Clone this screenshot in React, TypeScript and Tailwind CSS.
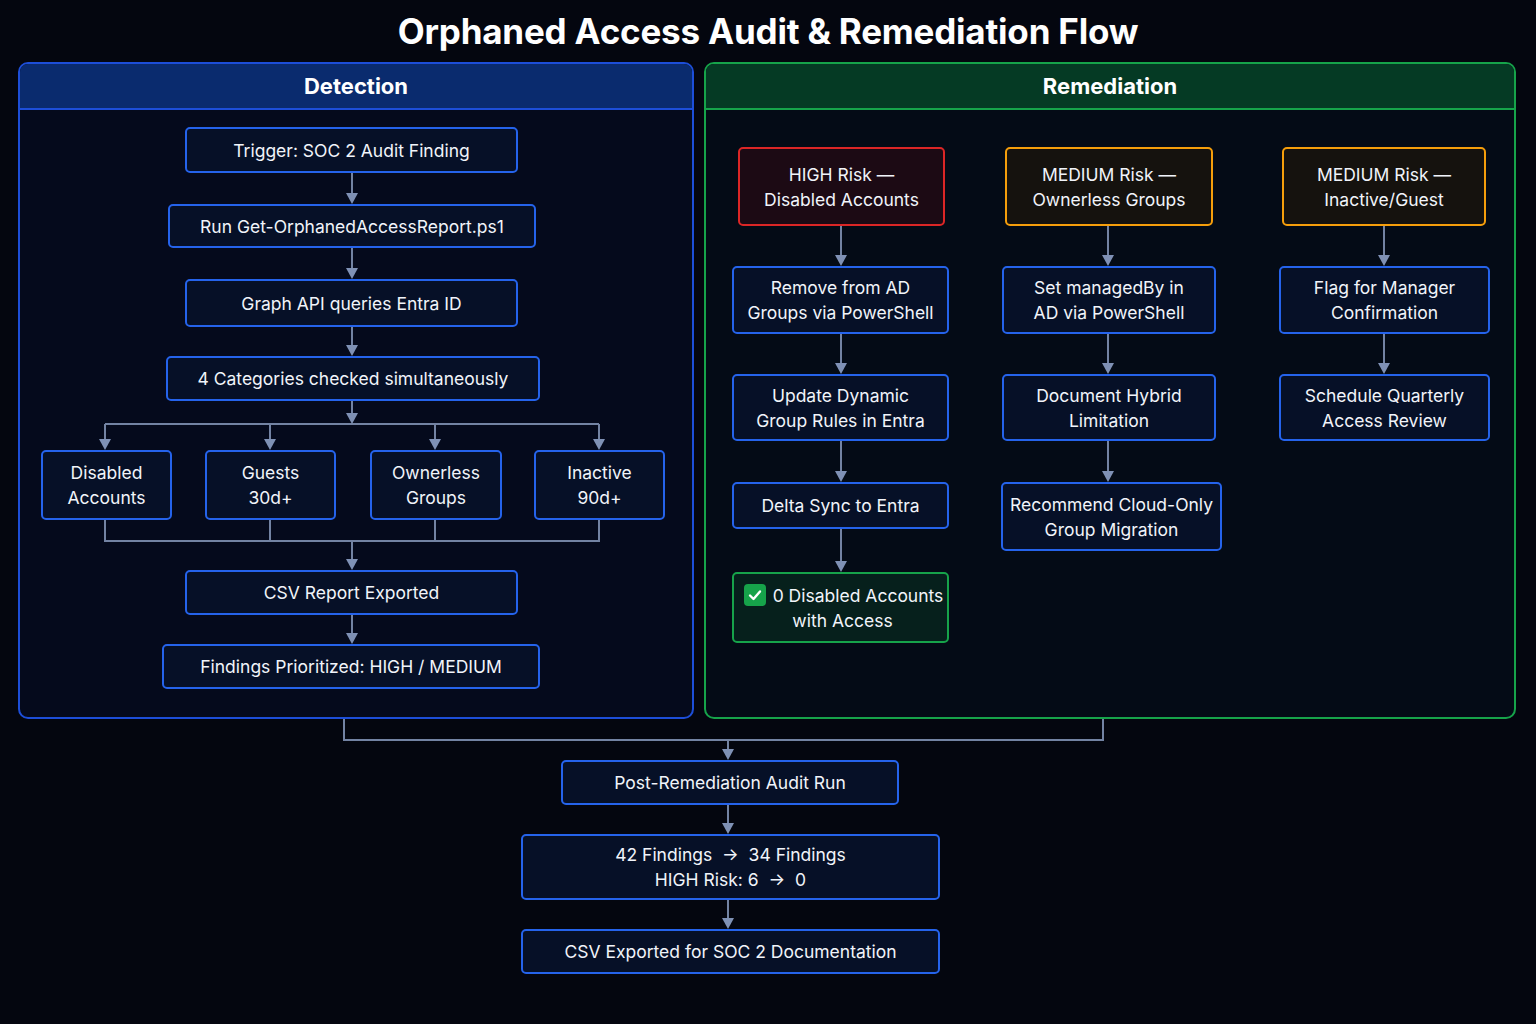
import React from "react";

type N = { x: number; y: number; w: number; h: number; t: React.ReactNode; k?: "b" | "r" | "a" | "g" };

const nodes: N[] = [
  { x: 185, y: 127, w: 333, h: 46, t: "Trigger: SOC 2 Audit Finding" },
  { x: 168, y: 204, w: 368, h: 44, t: "Run Get-OrphanedAccessReport.ps1" },
  { x: 185, y: 279, w: 333, h: 48, t: "Graph API queries Entra ID" },
  { x: 166, y: 356, w: 374, h: 45, t: "4 Categories checked simultaneously" },
  { x: 41, y: 450, w: 131, h: 70, t: <>Disabled<br />Accounts</> },
  { x: 205, y: 450, w: 131, h: 70, t: <>Guests<br />30d+</> },
  { x: 370, y: 450, w: 132, h: 70, t: <>Ownerless<br />Groups</> },
  { x: 534, y: 450, w: 131, h: 70, t: <>Inactive<br />90d+</> },
  { x: 185, y: 570, w: 333, h: 45, t: "CSV Report Exported" },
  { x: 162, y: 644, w: 378, h: 45, t: "Findings Prioritized: HIGH / MEDIUM" },
  { x: 738, y: 147, w: 207, h: 79, t: <>HIGH Risk —<br />Disabled Accounts</>, k: "r" },
  { x: 732, y: 266, w: 217, h: 68, t: <>Remove from AD<br />Groups via PowerShell</> },
  { x: 732, y: 374, w: 217, h: 67, t: <>Update Dynamic<br />Group Rules in Entra</> },
  { x: 732, y: 482, w: 217, h: 47, t: "Delta Sync to Entra" },
  { x: 1005, y: 147, w: 208, h: 79, t: <>MEDIUM Risk —<br />Ownerless Groups</>, k: "a" },
  { x: 1002, y: 266, w: 214, h: 68, t: <>Set managedBy in<br />AD via PowerShell</> },
  { x: 1002, y: 374, w: 214, h: 67, t: <>Document Hybrid<br />Limitation</> },
  { x: 1001, y: 482, w: 221, h: 69, t: <>Recommend Cloud-Only<br />Group Migration</> },
  { x: 1282, y: 147, w: 204, h: 79, t: <>MEDIUM Risk —<br />Inactive/Guest</>, k: "a" },
  { x: 1279, y: 266, w: 211, h: 68, t: <>Flag for Manager<br />Confirmation</> },
  { x: 1279, y: 374, w: 211, h: 67, t: <>Schedule Quarterly<br />Access Review</> },
  { x: 561, y: 760, w: 338, h: 45, t: "Post-Remediation Audit Run" },
  { x: 521, y: 834, w: 419, h: 66, t: <>42 Findings &nbsp;→&nbsp; 34 Findings<br />HIGH Risk: 6 &nbsp;→&nbsp; 0</> },
  { x: 521, y: 929, w: 419, h: 45, t: "CSV Exported for SOC 2 Documentation" },
];

const cls = {
  b: "border-[#2563eb] bg-[#061027]",
  r: "border-[#dc2626] bg-[#1c0a14]",
  a: "border-[#f59e0b] bg-[#15120e]",
  g: "border-[#16a34a] bg-[#06201c]",
};

const arrows: [number, number, number][] = [
  [352, 173, 204], [352, 248, 279], [352, 327, 356], [352, 401, 424],
  [105, 424, 450], [270, 424, 450], [435, 424, 450], [599, 424, 450],
  [352, 541, 570], [352, 615, 644],
  [841, 226, 266], [841, 334, 374], [841, 441, 482], [841, 529, 572],
  [1108, 226, 266], [1108, 334, 374], [1108, 441, 482],
  [1384, 226, 266], [1384, 334, 374],
  [728, 740, 760], [728, 805, 834], [728, 900, 929],
];

export default function App() {
  return (
    <div className="relative w-[1536px] h-[1024px] bg-[#04060f] overflow-hidden text-white" style={{ fontFamily: "Inter, 'Noto Sans', sans-serif" }}>
      <h1 className="absolute left-0 right-0 top-[9px] text-center text-[35px] font-bold leading-[44px] tracking-[-0.2px]">Orphaned Access Audit &amp; Remediation Flow</h1>

      <div className="absolute left-[18px] top-[62px] w-[676px] h-[657px] rounded-[10px] border-2 border-[#1d4ed8] bg-[#050a1c] overflow-hidden">
        <div className="h-[46px] bg-[#0a2b6e] border-b-2 border-[#1d4ed8] flex items-center justify-center text-[22px] font-bold">Detection</div>
      </div>
      <div className="absolute left-[704px] top-[62px] w-[812px] h-[657px] rounded-[10px] border-2 border-[#16a34a] bg-[#040b16] overflow-hidden">
        <div className="h-[46px] bg-[#053a24] border-b-2 border-[#16a34a] flex items-center justify-center text-[22px] font-bold">Remediation</div>
      </div>

      <svg className="absolute inset-0" width="1536" height="1024">
        <g stroke="#7383a3" strokeWidth="2" fill="none">
          <path d="M105 424H599" />
          <path d="M105 520V541H599V520M270 520V541M435 520V541" />
          <path d="M344 719V740H1103V719" />
          {arrows.map(([x, a, b], i) => <path key={i} d={`M${x} ${a}V${b - 9}`} />)}
        </g>
        <g fill="#7f91b5">
          {arrows.map(([x, , b], i) => <path key={i} d={`M${x - 6} ${b - 11}L${x + 6} ${b - 11}L${x} ${b}Z`} />)}
        </g>
      </svg>

      {nodes.map((n, i) => (
        <div key={i} className={`absolute flex items-center justify-center text-center rounded-[5px] border-2 text-[17.5px] leading-[25px] text-[#f1f4fa] ${cls[n.k ?? "b"]}`} style={{ left: n.x, top: n.y, width: n.w, height: n.h }}>
          <div>{n.t}</div>
        </div>
      ))}

      <div className={`absolute left-[732px] top-[572px] w-[217px] h-[71px] rounded-[5px] border-2 flex flex-col items-center justify-center text-[17.5px] leading-[25px] text-[#f1f4fa] ${cls.g}`}>
        <div className="flex items-center gap-[7px] pl-[6px]">
          <span className="w-[22px] h-[22px] rounded-[4px] bg-[#16a34a] flex items-center justify-center">
            <svg width="16" height="16" viewBox="0 0 16 16"><path d="M3 8.5L6.5 12L13 4.5" stroke="white" strokeWidth="2.4" fill="none" strokeLinecap="round" strokeLinejoin="round" /></svg>
          </span>
          <span>0 Disabled Accounts</span>
        </div>
        <div className="pl-[4px]">with Access</div>
      </div>
    </div>
  );
}
